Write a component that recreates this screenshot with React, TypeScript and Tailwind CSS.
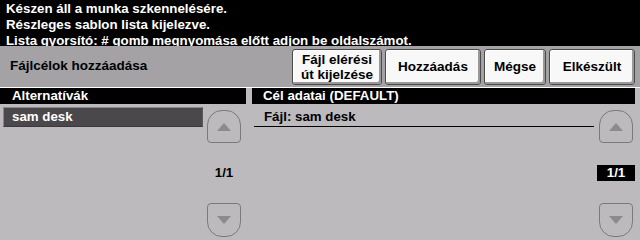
import React from 'react';

function ScrollUp() {
  return (
    <div className="w-[34px] h-[33px] border border-[#7b797b] rounded-t-[15px] rounded-b-[4px] flex items-center justify-center">
      <svg width="14" height="8" viewBox="0 0 14 8">
        <polygon points="7,0 14,8 0,8" fill="#8c8a8c" />
      </svg>
    </div>
  );
}

function ScrollDown() {
  return (
    <div className="w-[34px] h-[34px] border border-[#7b797b] rounded-b-[15px] rounded-t-[4px] flex items-center justify-center">
      <svg width="14" height="8" viewBox="0 0 14 8">
        <polygon points="0,0 14,0 7,8" fill="#8c8a8c" />
      </svg>
    </div>
  );
}

function ToolButton({ children, w }: { children: React.ReactNode; w: string }) {
  return (
    <button
      className={`${w} h-[36px] bg-[#f8f8f8] border border-[#4a4a4a] rounded-[3px] shadow-[inset_-2px_-2px_0_#9a989a,inset_1px_1px_0_#ffffff] text-black text-[13.5px] leading-[15px] font-bold flex items-center justify-center text-center`}
    >
      {children}
    </button>
  );
}

export default function App() {
  return (
    <div
      className="w-[640px] h-[240px] bg-[#bdbabd] overflow-hidden flex flex-col"
      style={{ fontFamily: '"Liberation Sans", Arial, sans-serif' }}
    >
      {/* Status messages */}
      <div className="h-[46px] bg-black text-white text-[13.3px] leading-[16px] font-bold px-[6px] pt-[1px]">
        <div>Készen áll a munka szkennelésére.</div>
        <div>Részleges sablon lista kijelezve.</div>
        <div>Lista gyorsító: # gomb megnyomása előtt adjon be oldalszámot.</div>
      </div>

      {/* Toolbar */}
      <div className="h-[42px] bg-[#a5a2a5] flex items-center pl-[10px] pr-[5px] border-b border-white">
        <div className="flex-1 text-[13.5px] font-bold text-black">Fájlcélok hozzáadása</div>
        <div className="flex gap-[3px] items-center">
          <ToolButton w="w-[90px]">
            <span>
              Fájl elérési
              <br />
              út kijelzése
            </span>
          </ToolButton>
          <ToolButton w="w-[96px]">Hozzáadás</ToolButton>
          <ToolButton w="w-[62px]">Mégse</ToolButton>
          <ToolButton w="w-[86px]">Elkészült</ToolButton>
        </div>
      </div>

      {/* Panels */}
      <div className="flex-1 flex">
        {/* Left panel */}
        <div className="w-[246px] flex flex-col">
          <div className="h-[16px] bg-black text-white text-[13.3px] leading-[16px] font-bold pl-[12px]">
            Alternatívák
          </div>
          <div className="flex-1 flex">
            <div className="w-[200px] ml-[3px] mt-[3px]">
              <div className="h-[20px] bg-[#4a484a] border border-[#8a888a] border-b-[#3a383a] border-r-[#5a585a] text-white text-[13.3px] font-bold leading-[18px] pl-[8px]">
                sam desk
              </div>
            </div>
            <div className="ml-[4px] w-[34px] flex flex-col pt-[6px] pb-[3px]">
              <ScrollUp />
              <div className="flex-1 flex items-center justify-center text-[13.3px] font-bold text-black">
                1/1
              </div>
              <ScrollDown />
            </div>
          </div>
        </div>

        {/* Right panel */}
        <div className="flex-1 ml-[6px] mr-[5px] flex flex-col">
          <div className="h-[16px] bg-black text-white text-[13.3px] leading-[16px] font-bold pl-[11px]">
            Cél adatai (DEFAULT)
          </div>
          <div className="flex-1 flex">
            <div className="flex-1 pl-[2px] pr-[3px]">
              <div className="h-[23px] pt-[4px] border-b border-black text-[13.3px] font-bold text-black leading-[18px] pl-[10px]">
                Fájl: sam desk
              </div>
            </div>
            <div className="w-[38px] flex flex-col items-center pt-[6px] pb-[3px]">
              <ScrollUp />
              <div className="flex-1 flex items-center justify-center">
                <div className="w-[38px] h-[16px] bg-black text-white text-[13.3px] font-bold leading-[16px] text-center">
                  1/1
                </div>
              </div>
              <ScrollDown />
            </div>
          </div>
        </div>
      </div>
    </div>
  );
}
